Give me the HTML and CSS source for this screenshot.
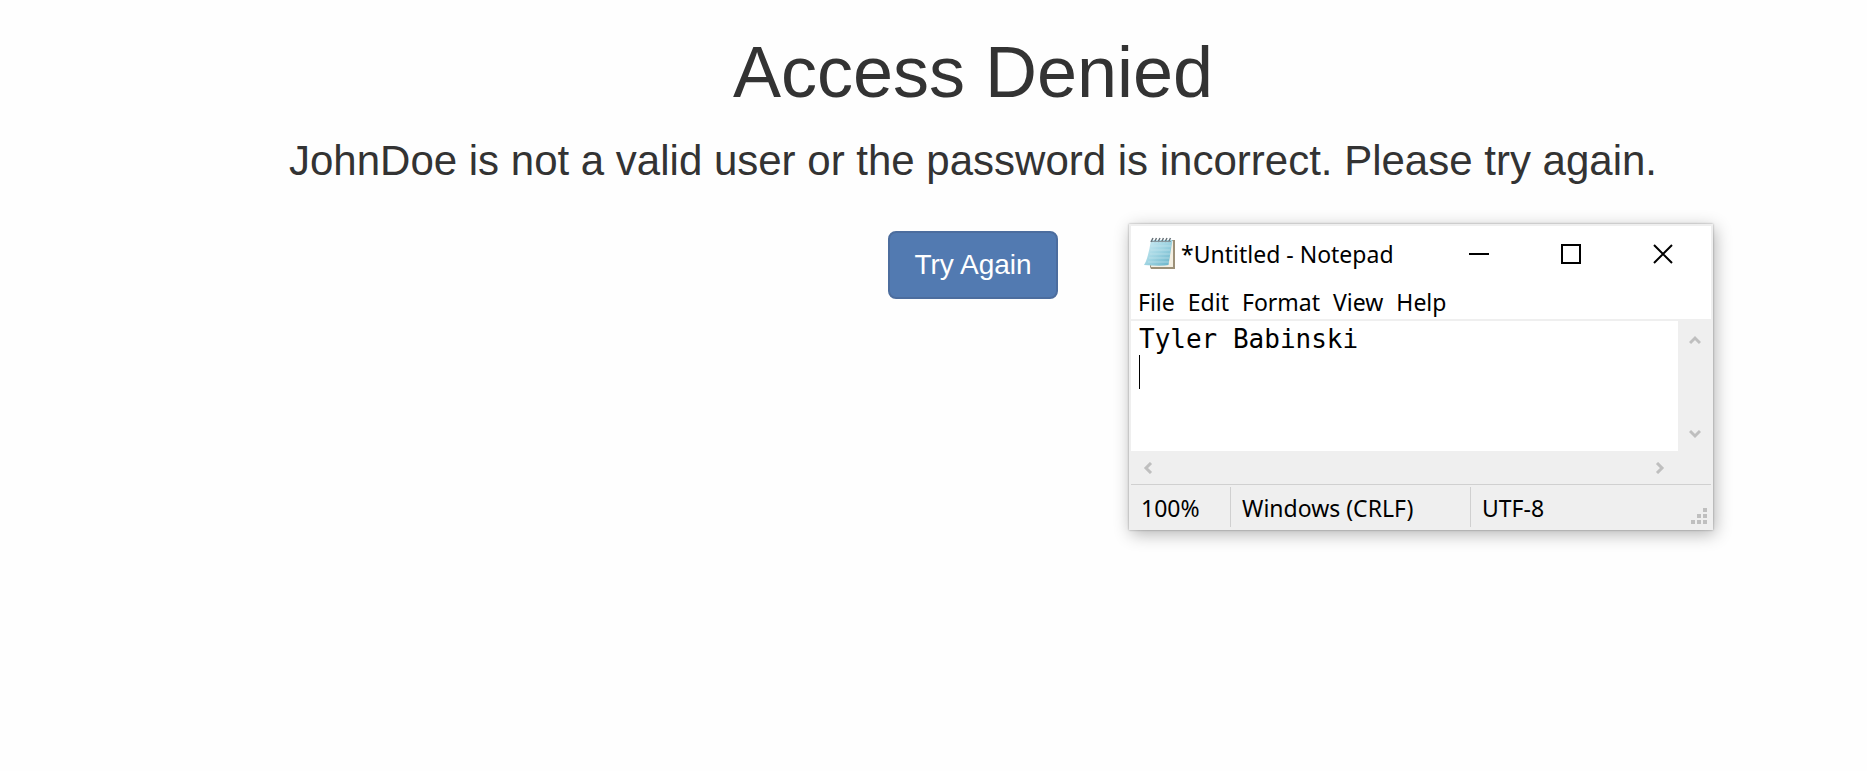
FILE: index.html
```html
<!DOCTYPE html>
<html lang="en">
<head>
<meta charset="utf-8">
<title>Access Denied</title>
<link rel="stylesheet" href="styles.css">
</head>
<body>
<main class="page">
  <h1 class="title">Access Denied</h1>
  <p class="message">JohnDoe is not a valid user or the password is incorrect. Please try again.</p>
  <button class="retry" type="button">Try Again</button>
</main>

<section class="notepad" aria-label="Notepad">
  <header class="titlebar">
    <svg class="app-icon" width="34" height="34" viewBox="0 0 34 34" aria-hidden="true">
      <defs>
        <linearGradient id="paper" x1="0" y1="0" x2="1" y2="1">
          <stop offset="0" stop-color="#d3eff5"/>
          <stop offset="0.5" stop-color="#9fd4e2"/>
          <stop offset="1" stop-color="#64b0c6"/>
        </linearGradient>
      </defs>
      <path d="M9 3H32V32H8L7 30Z" fill="#9c9078"/>
      <path d="M10 4H30V30H8Z" fill="#f4efe2"/>
      <path d="M8 3H29.500L25.500 28Q19 29.500 1 28Q5 22 8 3Z" fill="url(#paper)"/>
      <path d="M8 9H28M7.500 13H27M7 17H27M6 21H26M5 25H26" stroke="#c9e8ef" stroke-width="1" opacity=".6"/>
      <path d="M8 5l2-4M11.500 5l2-4M15 5l2-4M18.500 5l2-4M22 5l2-4M25.500 5l2-4" stroke="#66737a" stroke-width="1.500"/>
      <path d="M9 4.500H28" stroke="#87989e" stroke-width="1"/>
    </svg>
    <h2 class="doc-title">*Untitled - Notepad</h2>
    <div class="window-controls">
      <button class="control" type="button" aria-label="Minimize"><svg width="20" height="20"><path d="M0 10H20" stroke="#000" stroke-width="2"/></svg></button>
      <button class="control" type="button" aria-label="Maximize"><svg width="20" height="20"><path d="M1 1H19V19H1Z" fill="none" stroke="#000" stroke-width="2"/></svg></button>
      <button class="control" type="button" aria-label="Close"><svg width="20" height="20"><path d="M1 1L19 19M19 1L1 19" stroke="#000" stroke-width="2"/></svg></button>
    </div>
  </header>
  <nav class="menubar" aria-label="Menu">
    <button class="menu" type="button">File</button>
    <button class="menu" type="button">Edit</button>
    <button class="menu" type="button">Format</button>
    <button class="menu" type="button">View</button>
    <button class="menu" type="button">Help</button>
  </nav>
  <div class="editor">
    <div class="sheet">
      <textarea class="text" aria-label="Text editor" spellcheck="false">Tyler Babinski
</textarea>
      <span class="caret"></span>
    </div>
    <div class="scroll vertical">
      <button class="arrow" type="button" aria-label="Scroll up"><svg width="12" height="10"><path d="M1 8L6 3L11 8" fill="none" stroke="#bfbfbf" stroke-width="3"/></svg></button>
      <button class="arrow" type="button" aria-label="Scroll down"><svg width="12" height="10"><path d="M1 2L6 7L11 2" fill="none" stroke="#bfbfbf" stroke-width="3"/></svg></button>
    </div>
    <div class="scroll horizontal">
      <button class="arrow" type="button" aria-label="Scroll left"><svg width="10" height="12"><path d="M8 1L3 6L8 11" fill="none" stroke="#bfbfbf" stroke-width="3"/></svg></button>
      <button class="arrow" type="button" aria-label="Scroll right"><svg width="10" height="12"><path d="M2 1L7 6L2 11" fill="none" stroke="#bfbfbf" stroke-width="3"/></svg></button>
    </div>
  </div>
  <footer class="statusbar">
    <span class="status zoom-level">100%</span>
    <span class="status line-ending">Windows (CRLF)</span>
    <span class="status">UTF-8</span>
    <svg class="grip" width="16" height="16" fill="#bfbfbf" aria-hidden="true"><path d="M12 0h4v4h-4zM6 6h4v4h-4zM12 6h4v4h-4zM0 12h4v4h-4zM6 12h4v4h-4zM12 12h4v4h-4z"/></svg>
  </footer>
</section>
</body>
</html>
```
FILE: styles.css
```css
* {
  box-sizing: border-box;
}

body {
  margin: 0;
  background: #fefefe;
  color: #333;
  font-family: "Liberation Sans", Arial, sans-serif;
}

button {
  border: 0;
  padding: 0;
  background: none;
  color: inherit;
  font: inherit;
}

svg {
  display: block;
}

.page {
  display: flex;
  flex-direction: column;
  align-items: center;
  padding: 32px 0 0 79px;
}

.title {
  margin: 0;
  font-size: 72px;
  font-weight: 400;
  line-height: 80px;
}

.message {
  margin: 25px 0 0;
  font-size: 42px;
  line-height: 48px;
  text-align: center;
}

.retry {
  margin-top: 46px;
  padding: 16px 24px;
  border: 2px solid #4c6d9e;
  border-radius: 8px;
  background: #527ab1;
  color: #fff;
  font-size: 28px;
  line-height: 32px;
}

.notepad {
  position: absolute;
  top: 224px;
  right: 154px;
  width: 584px;
  border: 2px solid #efefef;
  border-bottom: 0;
  background: #fff;
  box-shadow: 0 0 2px rgba(0, 0, 0, .35), 2px 4px 16px rgba(0, 0, 0, .3);
  color: #000;
  font-family: "Noto Sans", "Open Sans", sans-serif;
  font-size: 23px;
  line-height: 32px;
}

.titlebar {
  display: flex;
  align-items: center;
  height: 55px;
  padding: 0 2px 0 12px;
}

.doc-title {
  margin: 0 0 0 4px;
  font-size: 23px;
  font-weight: 400;
}

.window-controls {
  display: flex;
  margin-left: auto;
}

.control {
  display: grid;
  place-items: center;
  width: 92px;
  height: 54px;
}

.menubar {
  display: flex;
  gap: 13px;
  height: 40px;
  padding: 4px 7px 0;
  border-bottom: 2px solid #efefef;
}

.editor {
  display: grid;
  grid-template-columns: 1fr 33px;
  grid-template-rows: 130px 33px;
  background: #efefef;
}

.sheet {
  position: relative;
  background: #fff;
}

.text {
  display: block;
  width: 100%;
  height: 100%;
  padding: 0 8px;
  border: 0;
  outline: 0;
  resize: none;
  overflow: hidden;
  background: transparent;
  color: #000;
  font-family: "DejaVu Sans Mono", monospace;
  font-size: 26px;
  line-height: 36px;
}

.caret {
  position: absolute;
  top: 34px;
  left: 8px;
  width: 1px;
  height: 34px;
  background: #000;
}

.scroll {
  display: flex;
  align-items: center;
  justify-content: space-between;
}

.vertical {
  flex-direction: column;
  padding: 14px 0 12px;
}

.horizontal {
  padding: 0 13px 0 12px;
}

.statusbar {
  display: flex;
  height: 46px;
  padding-bottom: 3px;
  border-top: 1px solid #d0d0d0;
  background: #efefef;
  line-height: 42px;
}

.status {
  margin-top: 2px;
  padding-left: 11px;
}

.zoom-level {
  width: 100px;
  padding-left: 10px;
  border-right: 1px solid #d0d0d0;
}

.line-ending {
  width: 240px;
  border-right: 1px solid #d0d0d0;
}

.grip {
  align-self: flex-end;
  margin: 0 4px 3px auto;
}
```
